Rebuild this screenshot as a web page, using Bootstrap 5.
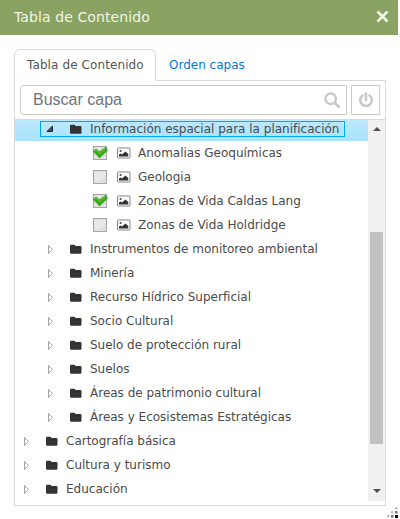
<!DOCTYPE html>
<html lang="es">
<head>
<meta charset="utf-8">
<meta name="viewport" content="width=device-width, initial-scale=1">
<title>Tabla de Contenido</title>
<link href="https://cdn.jsdelivr.net/npm/bootstrap@5.3.0/dist/css/bootstrap.min.css" rel="stylesheet">
<style>
body{width:400px;height:519px;overflow:hidden;background:#fff;font-family:"DejaVu Sans",Verdana,sans-serif;font-size:12px;color:#4a4a4a}
.panel-head{height:35px;width:398px;background:#8aa362;color:#f1f4ea;padding-left:14px;padding-right:9px;font-size:14px;letter-spacing:.1px}
.panel-head svg{margin-top:-3px}
.viewer{margin:14px 0 0 14px;width:372px}
.nav-tabs{--bs-nav-tabs-border-color:#d9d9d9;--bs-nav-tabs-link-active-border-color:#d9d9d9 #d9d9d9 #fff;--bs-nav-tabs-link-active-color:#555;--bs-nav-link-color:#0078d7;height:32px}
.nav-tabs .nav-link{height:32px;padding:7px 0 0 12px;line-height:17px;width:142px;white-space:nowrap}
.nav-tabs .nav-link.active{letter-spacing:.1px}
.viewer-body{height:425px;border:1px solid #d9d9d9;border-top:0}
.search-row{height:39px;padding:4px 5px 5px;gap:4px;border-bottom:1px solid #d9d9d9}
.search-box{width:328px;height:30px;border:1px solid #ccc;border-radius:4px 0 0 4px;padding-right:6px}
.search-box input{font:16px "Liberation Sans",Arial,sans-serif;padding:0 0 0 12px;color:#6c757d}
.search-box input::placeholder{color:#6c757d;opacity:1}
.power{width:29px;height:30px;border:1px solid #ccc;background:#fff}
.tree-area{height:381px}
.tree{width:353px;overflow:hidden}
.tree-list{margin-top:-3px}
.tree-row{height:24px;padding-left:6px;line-height:18px;white-space:nowrap}
.tree-row.picked{background:linear-gradient(#bfeaff,#a9e2fd)}
.tree-row.lv2{padding-left:30px}
.tree-row.lv3{padding-left:78px}
.twist{width:12px;height:16px;margin-right:13px}
.folder{width:13px;height:13px;margin-right:7px}
.tick{width:15px;height:16px;margin-right:9px}
.layer{width:14px;height:12px;margin-right:7px}
.tree-row .outlined{height:14px;margin-left:-4px;padding-left:4px;padding-right:5px;outline:1px solid #00a8ef}
.bar{width:17px;height:381px;background:#f1f1f1;padding:6px 0 7px}
.bar .thumb{width:13px;height:212px;background:#c1c1c1;margin:100px 0 auto}
.bar svg{height:6px}
.grip{position:absolute;left:387px;top:507px}
</style>
<script src="https://cdn.jsdelivr.net/npm/bootstrap@5.3.0/dist/js/bootstrap.bundle.min.js"></script>
</head>
<body>
<svg class="d-none">
<symbol id="closed" viewBox="0 0 12 16"><path d="M3.500 4.500v8L7.500 8.500z" fill="#fff" stroke="#999" stroke-width=".9"/></symbol>
<symbol id="open" viewBox="0 0 12 16"><path d="M7.500 5v5.500H2z" fill="#555" stroke="#222"/></symbol>
<symbol id="folder" viewBox="0 0 13 13"><path d="M0 3q0-1.300 1.300-1.300h2.900q1 0 1.200 1.300h4.900Q11.500 3 11.500 4.300v5.200q0 1.200-1.200 1.200h-9Q0 10.700 0 9.500z" fill="#333"/></symbol>
<symbol id="layer" viewBox="0 0 14 12"><rect x=".5" y="1" width="12.500" height="10" rx=".8" fill="#fff" stroke="#858585"/><path d="M2 9.500V7.500l1.500-1 1.500 1 3.500-3 2.800 2.500v2.500z" fill="#333"/><circle cx="3.500" cy="4" r="1" fill="#333"/></symbol>
<symbol id="box" viewBox="0 0 15 16"><rect x=".5" y="1.500" width="13" height="13" fill="#e0e0e0" stroke="#a5a5a5"/><path d="M2 13V3h10v3Q10 10 7 11z" fill="#e8e8e8"/></symbol>
<symbol id="checked" viewBox="0 0 15 16"><use href="#box"/><path d="M.3 6.500 3 4l3.500 2.700L12.500 2.500l2 2.800L6.500 13z" fill="#37ac17" stroke="#2b9412" stroke-width=".6"/><path d="M2 6 3.200 5.200l3.300 3L12 4" fill="none" stroke="#6fd042"/></symbol>
</svg>
<header class="panel-head d-flex align-items-center justify-content-between"><span>Tabla de Contenido</span>
<svg width="13" height="13" viewBox="0 0 13 13"><path d="M1.500 1.500l10 10M11.500 1.500l-10 10" stroke="#f3f5ef" stroke-width="2.500"/></svg></header>
<main class="viewer">
<ul class="nav nav-tabs flex-nowrap">
<li class="nav-item"><a class="nav-link active" href="#">Tabla de Contenido</a></li>
<li class="nav-item"><a class="nav-link" href="#">Orden capas</a></li>
</ul>
<div class="viewer-body">
<div class="search-row d-flex">
<div class="search-box d-flex align-items-center"><input class="form-control border-0 shadow-none bg-transparent" placeholder="Buscar capa" aria-label="Buscar capa">
<svg class="flex-shrink-0" width="16" height="16" viewBox="0 0 16 16"><circle cx="6.700" cy="6.700" r="5.200" fill="none" stroke="#c8c8c8" stroke-width="2.500"/><path d="M10.500 10.500l4 4" stroke="#c8c8c8" stroke-width="3" stroke-linecap="round"/></svg></div>
<button class="power p-0 d-flex align-items-center justify-content-center" aria-label="Opciones"><svg width="16" height="16" viewBox="0 0 16 16"><path d="M4.500 3.500a5.800 5.800 0 1 0 7 0M8 1.500V8" fill="none" stroke="#c8c8c8" stroke-width="2.500" stroke-linecap="round"/></svg></button>
</div>
<div class="tree-area d-flex">
<div class="tree"><div class="tree-list">
<div class="tree-row lv2 picked d-flex align-items-center"><div class="outlined d-flex align-items-center"><svg class="twist"><use href="#open"/></svg><svg class="folder"><use href="#folder"/></svg><span>Información espacial para la planificación</span></div></div>
<div class="tree-row lv3 d-flex align-items-center"><svg class="tick"><use href="#checked"/></svg><svg class="layer"><use href="#layer"/></svg><span>Anomalias Geoquímicas</span></div>
<div class="tree-row lv3 d-flex align-items-center"><svg class="tick"><use href="#box"/></svg><svg class="layer"><use href="#layer"/></svg><span>Geologia</span></div>
<div class="tree-row lv3 d-flex align-items-center"><svg class="tick"><use href="#checked"/></svg><svg class="layer"><use href="#layer"/></svg><span>Zonas de Vida Caldas Lang</span></div>
<div class="tree-row lv3 d-flex align-items-center"><svg class="tick"><use href="#box"/></svg><svg class="layer"><use href="#layer"/></svg><span>Zonas de Vida Holdridge</span></div>
<div class="tree-row lv2 d-flex align-items-center"><svg class="twist"><use href="#closed"/></svg><svg class="folder"><use href="#folder"/></svg><span>Instrumentos de monitoreo ambiental</span></div>
<div class="tree-row lv2 d-flex align-items-center"><svg class="twist"><use href="#closed"/></svg><svg class="folder"><use href="#folder"/></svg><span>Minería</span></div>
<div class="tree-row lv2 d-flex align-items-center"><svg class="twist"><use href="#closed"/></svg><svg class="folder"><use href="#folder"/></svg><span>Recurso Hídrico Superficial</span></div>
<div class="tree-row lv2 d-flex align-items-center"><svg class="twist"><use href="#closed"/></svg><svg class="folder"><use href="#folder"/></svg><span>Socio Cultural</span></div>
<div class="tree-row lv2 d-flex align-items-center"><svg class="twist"><use href="#closed"/></svg><svg class="folder"><use href="#folder"/></svg><span>Suelo de protección rural</span></div>
<div class="tree-row lv2 d-flex align-items-center"><svg class="twist"><use href="#closed"/></svg><svg class="folder"><use href="#folder"/></svg><span>Suelos</span></div>
<div class="tree-row lv2 d-flex align-items-center"><svg class="twist"><use href="#closed"/></svg><svg class="folder"><use href="#folder"/></svg><span>Áreas de patrimonio cultural</span></div>
<div class="tree-row lv2 d-flex align-items-center"><svg class="twist"><use href="#closed"/></svg><svg class="folder"><use href="#folder"/></svg><span>Áreas y Ecosistemas Estratégicas</span></div>
<div class="tree-row d-flex align-items-center"><svg class="twist"><use href="#closed"/></svg><svg class="folder"><use href="#folder"/></svg><span>Cartografía básica</span></div>
<div class="tree-row d-flex align-items-center"><svg class="twist"><use href="#closed"/></svg><svg class="folder"><use href="#folder"/></svg><span>Cultura y turismo</span></div>
<div class="tree-row d-flex align-items-center"><svg class="twist"><use href="#closed"/></svg><svg class="folder"><use href="#folder"/></svg><span>Educación</span></div>
</div></div>
<div class="bar d-flex flex-column align-items-center"><svg width="8" height="6"><path d="M0 5l4-4 4 4z" fill="#505050"/></svg><div class="thumb"></div>
<svg width="8" height="6"><path d="M0 1l4 4 4-4z" fill="#505050"/></svg></div>
</div>
</div>
</main>
<svg class="grip" width="11" height="11"><path d="M8 0h2.500v2.500H8zM4 4h2.500v2.500H4zM0 8h2.500v2.500H0z" fill="#c4c4c4"/><path d="M8 4h2.500v2.500H8zM4 8h2.500v2.500H4z" fill="#777"/><path d="M8 8h3v3H8z" fill="#000"/></svg>
</body>
</html>
